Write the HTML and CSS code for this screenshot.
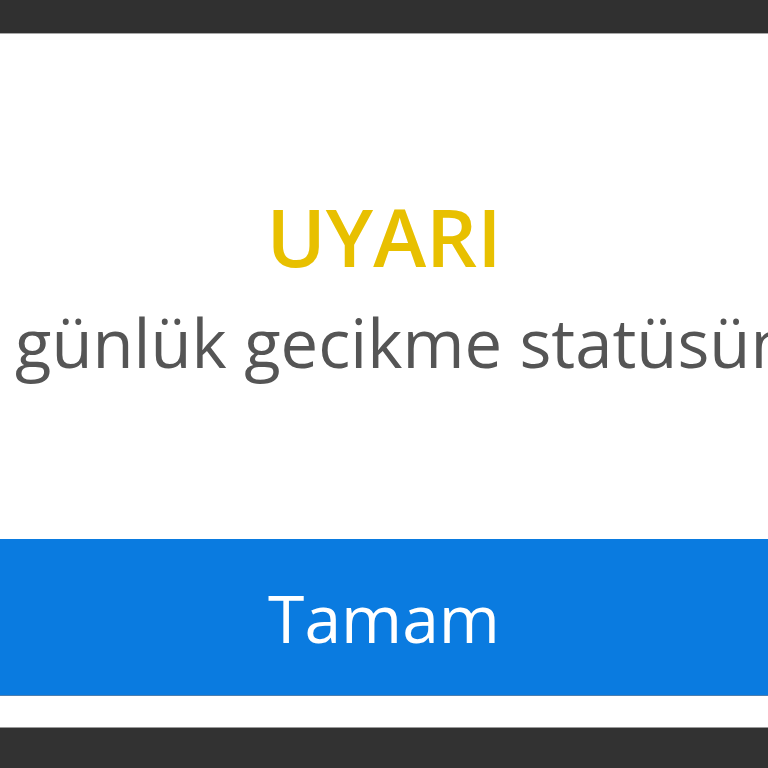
FILE: index.html
```html
<!DOCTYPE html>
<html lang="tr">
<head>
<meta charset="utf-8">
<link rel="stylesheet" href="styles.css">
</head>
<body>
<div class="screen">
  <div class="topbar"></div>
  <div class="dialog">
    <div class="content">
      <h1 class="title">UYARI</h1>
      <p class="message">günlük gecikme statüsüne</p>
    </div>
    <button class="ok">Tamam</button>
    <div class="dialog-foot"></div>
  </div>
  <div class="bottombar"></div>
</div>
</body>
</html>
```
FILE: styles.css
```css
html, body {
  margin: 0;
  padding: 0;
  background: #ffffff;
}
.screen {
  width: 768px;
  height: 768px;
  display: flex;
  flex-direction: column;
  overflow: hidden;
  font-family: "Open Sans", "Noto Sans", sans-serif;
}
.topbar {
  height: 33px;
  background: #303030;
  border-bottom: 1px solid #a8a8a8;
  flex: none;
}
.dialog {
  flex: 1;
  display: flex;
  flex-direction: column;
  background: #ffffff;
}
.content {
  flex: 1;
  display: flex;
  flex-direction: column;
  padding-top: 162px;
}
.title {
  margin: 0;
  font-size: 80px;
  line-height: 80px;
  font-weight: 600;
  color: #e8c000;
  text-align: center;
}
.message {
  margin: 21px 0 0 0;
  font-size: 67px;
  line-height: 90px;
  color: #555555;
  white-space: nowrap;
  overflow: hidden;
  padding-left: 15px;
}
.ok {
  flex: none;
  height: 157px;
  border: none;
  border-bottom: 1px solid #4d7fb0;
  margin: 0;
  padding: 0;
  background: #0a7be0;
  color: #ffffff;
  font-family: "Open Sans", "Noto Sans", sans-serif;
  font-size: 66px;
  line-height: 157px;
  font-weight: 400;
  text-align: center;
}
.dialog-foot {
  height: 31px;
  flex: none;
  background: #ffffff;
  border-bottom: 1px solid #9a9a9a;
}
.bottombar {
  flex: none;
  height: 40px;
  background: #323232;
}
```
